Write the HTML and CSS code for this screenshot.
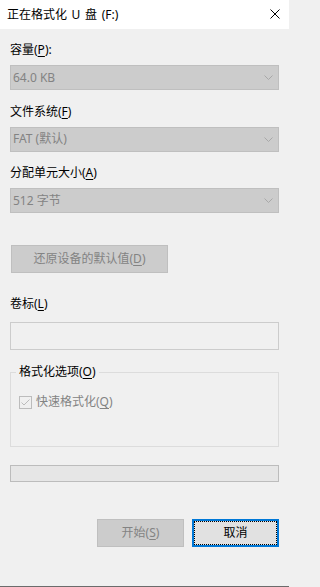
FILE: index.html
```html
<!DOCTYPE html>
<html lang="zh-CN">
<head>
<meta charset="utf-8">
<title>正在格式化 U 盘 (F:)</title>
<link rel="stylesheet" href="styles.css">
</head>
<body>
<div class="window">
  <div class="titlebar">
    <span class="title">正在格式化 U 盘 (F:)</span>
    <svg class="close" width="10" height="10" viewBox="0 0 10 10"><path d="M0.5 0.5L9.5 9.5M9.5 0.5L0.5 9.5" stroke="#000" stroke-width="1" fill="none"/></svg>
  </div>
  <div class="content">
    <div class="field first">
      <div class="label">容量(<u>P</u>):</div>
      <div class="combo"><span>64.0 KB</span><svg class="chev" width="9" height="5" viewBox="0 0 9 5"><path d="M0.5 0.5L4.5 4.5L8.5 0.5" stroke="#a8a8a8" fill="none"/></svg></div>
    </div>
    <div class="field">
      <div class="label">文件系统(<u>F</u>)</div>
      <div class="combo"><span>FAT (默认)</span><svg class="chev" width="9" height="5" viewBox="0 0 9 5"><path d="M0.5 0.5L4.5 4.5L8.5 0.5" stroke="#a8a8a8" fill="none"/></svg></div>
    </div>
    <div class="field">
      <div class="label">分配单元大小(<u>A</u>)</div>
      <div class="combo"><span>512 字节</span><svg class="chev" width="9" height="5" viewBox="0 0 9 5"><path d="M0.5 0.5L4.5 4.5L8.5 0.5" stroke="#a8a8a8" fill="none"/></svg></div>
    </div>
    <div class="btn disabled restore">还原设备的默认值(<u>D</u>)</div>
    <div class="label vol">卷标(<u>L</u>)</div>
    <div class="textbox"></div>
    <fieldset class="group">
      <legend>格式化选项(<u>O</u>)</legend>
      <div class="check-row">
        <svg class="checkbox" width="13" height="13" viewBox="0 0 13 13"><rect x="0.5" y="0.5" width="12" height="12" fill="#f0f0f0" stroke="#bcbcbc"/><path d="M2.5 6.5L5 9L10.5 3.5" stroke="#bcbcbc" stroke-width="1" fill="none"/></svg>
        <span class="check-label">快速格式化(<u>Q</u>)</span>
      </div>
    </fieldset>
    <div class="progress"></div>
    <div class="actions">
      <div class="btn disabled action">开始(<u>S</u>)</div>
      <div class="btn default action">取消</div>
    </div>
  </div>
</div>
</body>
</html>
```
FILE: styles.css
```css
html, body {
  margin: 0;
  padding: 0;
  background: #f0f0f0;
}
body {
  font-family: "Noto Sans", "Noto Sans CJK SC", sans-serif;
  font-size: 12px;
  line-height: 16px;
  color: #000;
}
u {
  text-decoration: underline;
  text-underline-offset: 2px;
}
.window {
  width: 289px;
  height: 587px;
  box-sizing: border-box;
  border-bottom: 1px solid #6b6b6b;
  display: flex;
  flex-direction: column;
  overflow: hidden;
}
.titlebar {
  height: 29px;
  flex: none;
  background: #fff;
  display: flex;
  align-items: center;
  padding: 0 9px 0 7px;
  justify-content: space-between;
}
.title {
  white-space: nowrap;
  word-spacing: 1.5px;
}
.close {
  display: block;
  margin-top: -1px;
}
.content {
  padding: 0 10px;
  display: flex;
  flex-direction: column;
}
.field {
  margin-top: 13.5px;
}
.field.first {
  margin-top: 13px;
}
.label {
  height: 16px;
  white-space: nowrap;
}
.combo {
  margin-top: 7px;
  height: 25px;
  box-sizing: border-box;
  background: #cccccc;
  border: 1px solid #bfbfbf;
  color: #838383;
  display: flex;
  align-items: center;
  justify-content: space-between;
  padding: 0 5px 0 2px;
}
.chev {
  display: block;
}
.btn {
  box-sizing: border-box;
  height: 28px;
  display: flex;
  align-items: center;
  justify-content: center;
  white-space: nowrap;
}
.btn.disabled {
  background: #cccccc;
  border: 1px solid #bfbfbf;
  color: #838383;
}
.restore {
  margin-top: 32px;
  margin-left: 1px;
  width: 157px;
}
.btn.default {
  background: #e1e1e1;
  border: 2px solid #0078d7;
  outline: 1px dotted #000;
  outline-offset: -3px;
  color: #000;
}
.label.vol {
  margin-top: 23px;
}
.textbox {
  margin-top: 10px;
  height: 28px;
  box-sizing: border-box;
  border: 1px solid #cccccc;
  background: #f0f0f0;
}
.group {
  margin: 14px 0 0;
  padding: 0 8px 36px;
  border: 1px solid #dcdcdc;
  min-width: 0;
}
.group legend {
  padding: 0 3px;
  margin-left: -3px;
  line-height: 16px;
  white-space: nowrap;
}
.check-row {
  margin-top: 14px;
  display: flex;
  align-items: center;
  gap: 4px;
  height: 16px;
}
.checkbox {
  display: block;
  flex: none;
}
.check-label {
  color: #838383;
  white-space: nowrap;
}
.progress {
  margin-top: 18px;
  height: 17px;
  box-sizing: border-box;
  background: #e6e6e6;
  border: 1px solid #bcbcbc;
}
.actions {
  margin-top: 37px;
  display: flex;
  justify-content: flex-end;
  gap: 8px;
}
.action {
  width: 87px;
}
```
